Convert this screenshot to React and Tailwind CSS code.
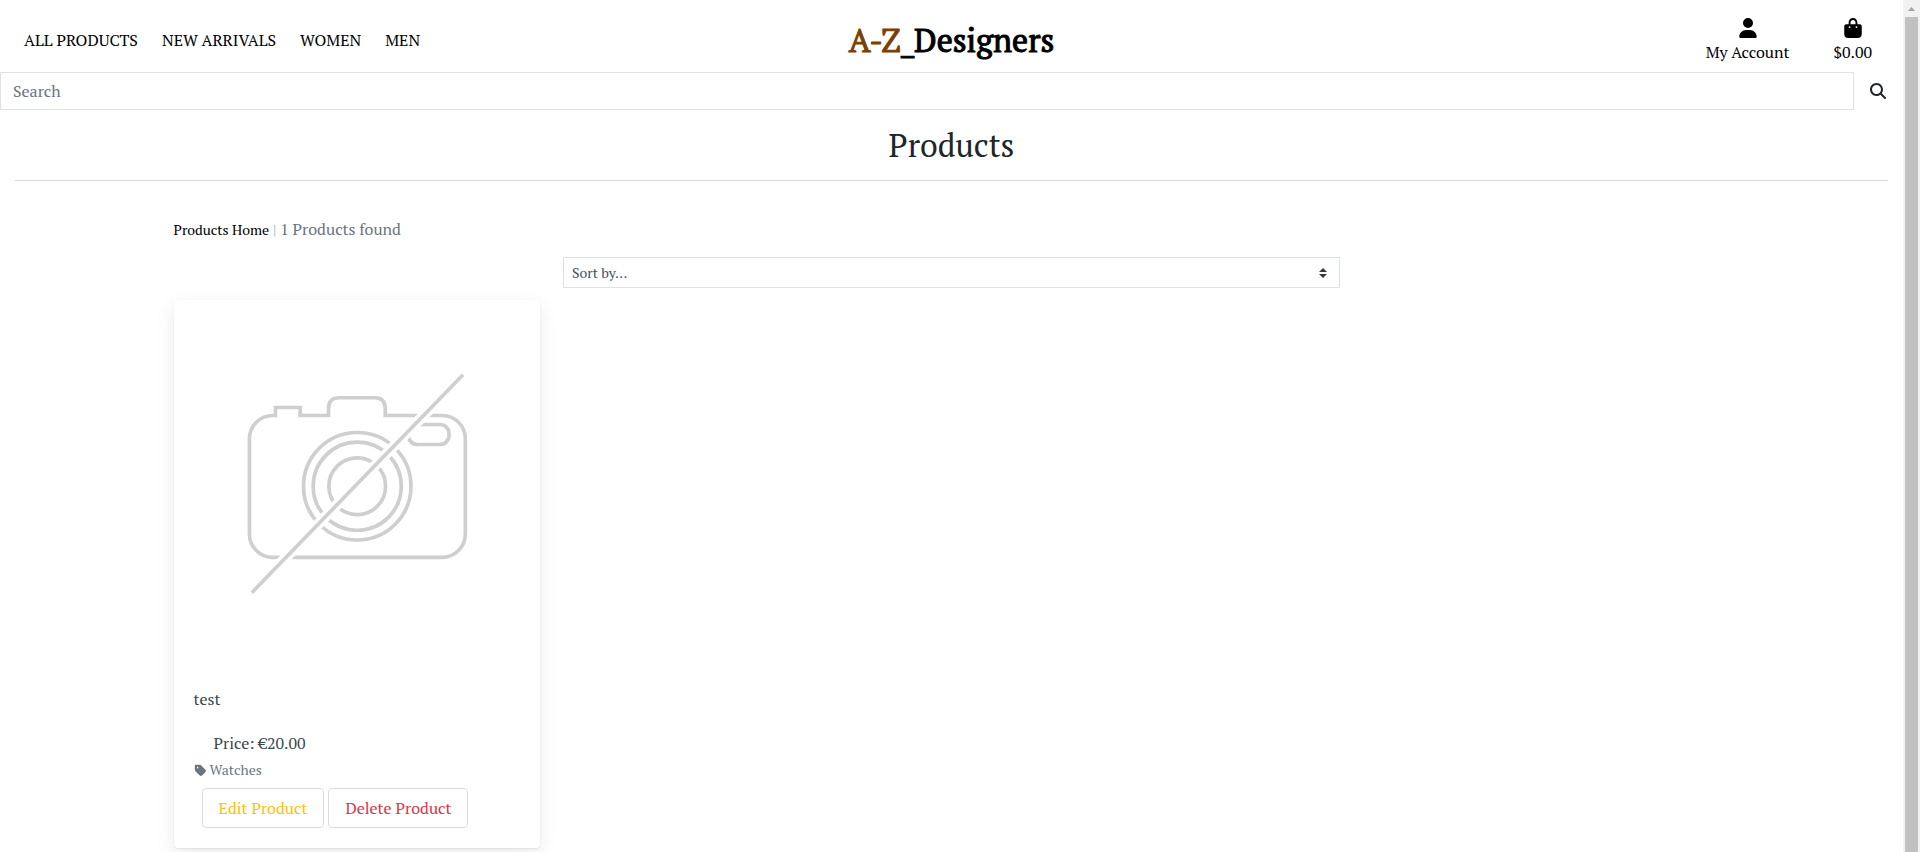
import React from "react";
import { FaUser, FaBagShopping, FaMagnifyingGlass, FaTag } from "react-icons/fa6";

const navLinks = ["ALL PRODUCTS", "NEW ARRIVALS", "WOMEN", "MEN"];

function Header() {
  return (
    <header className="grid h-18 grid-cols-[1fr_auto_1fr] items-center text-black">
      <nav aria-label="Main" className="mt-2 flex gap-6 pl-6">
        {navLinks.map((label) => (
          <a key={label} href="#">
            {label}
          </a>
        ))}
      </nav>
      <a href="#" className="mt-2 text-[32px] leading-10 [-webkit-text-stroke:1px_currentColor]">
        <span className="text-[#7b3f00]">A-Z</span>_Designers
      </a>
      <div className="mt-2.5 flex justify-end gap-11 pr-[31px] text-center">
        <a href="#" className="flex flex-col items-center gap-0.5">
          <FaUser className="size-5" aria-hidden="true" />
          <span>My Account</span>
        </a>
        <a href="#" className="flex flex-col items-center gap-0.5">
          <FaBagShopping className="size-5" aria-hidden="true" />
          <span>$0.00</span>
        </a>
      </div>
    </header>
  );
}

function SearchBar() {
  return (
    <form className="flex" role="search">
      <input
        type="text"
        aria-label="Search"
        placeholder="Search"
        className="h-[38px] min-w-0 flex-1 border border-[#dee2e6] px-3 placeholder:text-[#6c757d]"
      />
      <button type="button" aria-label="Submit search" className="-ml-px border border-transparent px-4">
        <FaMagnifyingGlass className="size-4" aria-hidden="true" />
      </button>
    </form>
  );
}

function NoImage() {
  return (
    <svg
      viewBox="42 30 1098 1098"
      className="block aspect-square w-full"
      fill="none"
      stroke="#cfcfcf"
      strokeWidth="11"
      role="img"
      aria-label="No image available"
    >
      <path d="M351 376H338A70 70 0 0 0 268 446V731A70 70 0 0 0 338 801H845A70 70 0 0 0 915 731V446A70 70 0 0 0 845 376H675V355Q675 323 643 323H537Q505 323 505 355V376H420V352H346V381" />
      <rect x="744" y="403" width="122" height="60" rx="27" />
      <circle cx="591" cy="588" r="161" />
      <circle cx="591" cy="588" r="132" />
      <circle cx="591" cy="588" r="85" />
      <path d="M275 907L908 254" stroke="#ffffff" strokeWidth="32" />
      <path d="M275 907L908 254" />
    </svg>
  );
}

function ProductCard() {
  return (
    <article className="rounded bg-white shadow-[0_1px_2px_rgba(0,0,0,0.08),0_6px_20px_rgba(0,0,0,0.08)]">
      <a href="#" className="block">
        <NoImage />
      </a>
      <div className="px-5 pt-[21px] pb-5 text-[#40464c]">
        <p className="mb-5">test</p>
        <p className="pl-5">Price: €20.00</p>
        <p className="mt-1 flex items-center gap-[3px] text-sm leading-[22px] text-[#6c757d]">
          <FaTag className="size-[13px]" aria-hidden="true" />
          <a href="#">Watches</a>
        </p>
        <div className="mt-[7px] flex gap-1 pl-2">
          <button type="button" className="h-10 rounded border border-[#dcdcdc] px-4 text-[#ffc107]">
            Edit Product
          </button>
          <button type="button" className="h-10 rounded border border-[#dcdcdc] px-4 text-[#dc3545]">
            Delete Product
          </button>
        </div>
      </div>
    </article>
  );
}

function Scrollbar() {
  return (
    <div aria-hidden="true" className="flex w-[17px] shrink-0 flex-col bg-[#f1f1f1] px-0.5">
      <div className="flex h-[17px] items-center justify-center">
        <svg viewBox="0 0 7 4" className="h-1 w-[7px]" fill="#a3a3a3">
          <path d="M3.5 0L7 4H0Z" />
        </svg>
      </div>
      <div className="flex-1 bg-[#c1c1c1]" />
    </div>
  );
}

export default function App() {
  return (
    <div className="flex min-h-screen bg-white font-['PT_Serif','Noto_Serif','Liberation_Serif',serif] text-base text-[#212529]">
      <div className="min-w-0 flex-1">
        <Header />
        <SearchBar />
        <main>
          <div className="px-[15px]">
            <h2 className="mt-4 text-center text-[32px] leading-[38px]">Products</h2>
            <hr className="mt-4 border-[#dedede]" />
          </div>
          <div className="mx-auto mt-9 w-5/6">
            <p className="px-[15px] text-[#6c757d]">
              <a href="#" className="text-sm text-black">
                Products Home
              </a>{" "}
              <span className="text-sm text-[#9db2c6]">|</span> 1 Products found
            </p>
            <div className="mx-auto mt-4 w-1/2 px-2">
              <div className="relative">
                <select
                  aria-label="Sort by"
                  className="block h-[31px] w-full appearance-none border border-[#dee2e6] bg-white pl-2 text-sm text-[#495057]"
                >
                  <option>Sort by...</option>
                </select>
                <svg
                  viewBox="0 0 8 10"
                  className="pointer-events-none absolute top-[11px] right-[13px] h-[10px] w-2"
                  fill="#343a40"
                  aria-hidden="true"
                >
                  <path d="M4 0L0 4h8zM4 10L0 6h8z" />
                </svg>
              </div>
            </div>
            <div className="mt-3 grid grid-cols-4">
              <div className="px-[15px]">
                <ProductCard />
              </div>
            </div>
          </div>
        </main>
      </div>
      <Scrollbar />
    </div>
  );
}
